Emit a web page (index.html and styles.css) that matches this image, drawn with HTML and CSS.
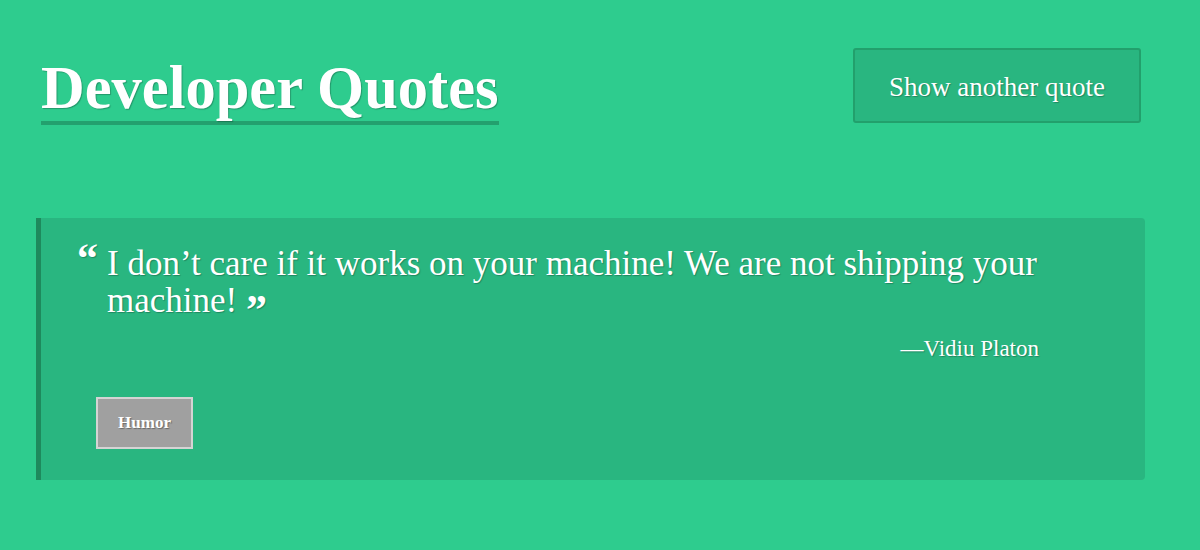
FILE: index.html
```html
<!DOCTYPE html>
<html lang="en">
<head>
<meta charset="utf-8">
<title>Developer Quotes</title>
<link rel="stylesheet" href="styles.css">
</head>
<body>
<header class="top">
  <h1 class="title">Developer Quotes</h1>
  <button class="next-btn" type="button">Show another quote</button>
</header>
<main class="card">
  <blockquote class="quote">
    <p class="quote-text"><span class="mark open">&ldquo;</span>I don’t care if it works on your machine! We are not shipping your machine! <span class="mark close">&rdquo;</span></p>
    <footer class="author">—Vidiu Platon</footer>
  </blockquote>
  <div class="tags">
    <span class="tag">Humor</span>
  </div>
</main>
</body>
</html>
```

FILE: styles.css
```css
html, body {
  margin: 0;
  padding: 0;
}
body {
  background: #2ecc8e;
  color: #fff;
  font-family: "Liberation Serif", "Times New Roman", serif;
  height: 550px;
  overflow: hidden;
}
.top {
  display: flex;
  justify-content: space-between;
  align-items: flex-start;
  padding: 48px 59px 0 41px;
}
.title {
  margin: 0;
  padding-top: 10px;
  font-size: 60.5px;
  line-height: 60px;
  font-weight: 700;
  border-bottom: 4px solid #23a06e;
  padding-bottom: 3px;
  text-shadow: 1px 1px 1px rgba(0,0,0,0.25);
}
.next-btn {
  width: 288px;
  height: 75px;
  background: #29b680;
  border: 2px solid #22a06c;
  border-radius: 3px;
  color: #fff;
  font-family: inherit;
  font-size: 27px;
  text-shadow: 1px 1px 1px rgba(0,0,0,0.25);
  padding: 4px 0 0;
}
.card {
  box-sizing: border-box;
  height: 262px;
  margin: 93px 55px 0 36px;
  background: #29b680;
  border-left: 5px solid #1e8a5d;
  border-radius: 0 4px 4px 0;
  padding: 27px 96px 0 36px;
}
.quote {
  margin: 0;
}
.quote-text {
  margin: 0;
  padding-left: 30px;
  text-indent: -30px;
  font-size: 35px;
  line-height: 37px;
  text-shadow: 1px 1px 1px rgba(0,0,0,0.25);
}
.mark {
  font-weight: 700;
  font-size: 42px;
  line-height: 0;
}
.mark.open {
  display: inline-block;
  width: 30px;
  text-indent: 0;
  vertical-align: 3px;
}
.mark.close {
  vertical-align: -12px;
}
.author {
  text-align: right;
  margin: 17px 10px 0 0;
  font-size: 23px;
  line-height: 26px;
  text-shadow: 1px 1px 1px rgba(0,0,0,0.25);
}
.tags {
  margin-top: 35px;
  padding-left: 19px;
}
.tag {
  display: inline-block;
  width: 93px;
  height: 48px;
  line-height: 48px;
  text-align: center;
  background: #a0a0a0;
  border: 2px solid #d4d4d4;
  font-weight: 700;
  font-size: 17px;
  text-shadow: 1px 1px 1px rgba(0,0,0,0.35);
}
```
